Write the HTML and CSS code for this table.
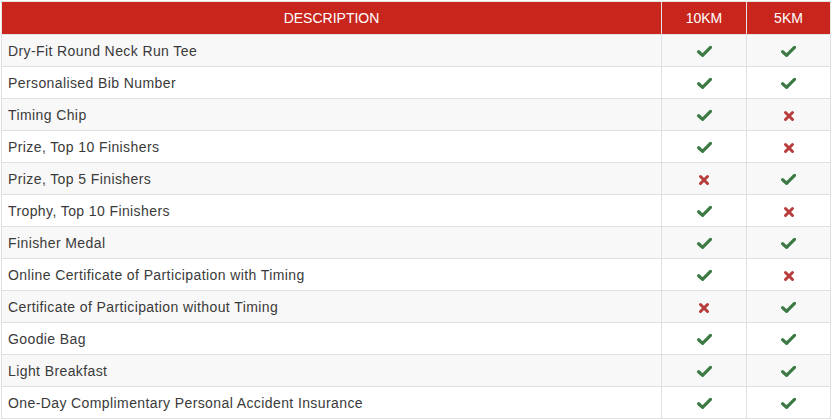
FILE: index.html
```html
<!DOCTYPE html>
<html>
<head>
<meta charset="utf-8">
<link rel="stylesheet" href="styles.css">
</head>
<body>
<svg width="0" height="0" class="defs">
  <defs>
    <symbol id="ok" viewBox="0 0 14 12"><path d="M1.5 6.2 L5.2 9.6 L12.6 2.2" fill="none" stroke="currentColor" stroke-width="3" stroke-linecap="round" stroke-linejoin="round"/></symbol>
    <symbol id="no" viewBox="0 0 12 12"><path d="M2.5 2.5 L9.5 9.5 M9.5 2.5 L2.5 9.5" fill="none" stroke="currentColor" stroke-width="3" stroke-linecap="round"/></symbol>
  </defs>
</svg>
<table class="tbl">
  <thead>
    <tr><th class="c-desc">DESCRIPTION</th><th class="c-a">10KM</th><th class="c-b">5KM</th></tr>
  </thead>
  <tbody>
    <tr><td>Dry-Fit Round Neck Run Tee</td><td class="m"><svg class="ok"><use href="#ok"/></svg></td><td class="m"><svg class="ok"><use href="#ok"/></svg></td></tr>
    <tr><td>Personalised Bib Number</td><td class="m"><svg class="ok"><use href="#ok"/></svg></td><td class="m"><svg class="ok"><use href="#ok"/></svg></td></tr>
    <tr><td>Timing Chip</td><td class="m"><svg class="ok"><use href="#ok"/></svg></td><td class="m"><svg class="no"><use href="#no"/></svg></td></tr>
    <tr><td>Prize, Top 10 Finishers</td><td class="m"><svg class="ok"><use href="#ok"/></svg></td><td class="m"><svg class="no"><use href="#no"/></svg></td></tr>
    <tr><td>Prize, Top 5 Finishers</td><td class="m"><svg class="no"><use href="#no"/></svg></td><td class="m"><svg class="ok"><use href="#ok"/></svg></td></tr>
    <tr><td>Trophy, Top 10 Finishers</td><td class="m"><svg class="ok"><use href="#ok"/></svg></td><td class="m"><svg class="no"><use href="#no"/></svg></td></tr>
    <tr><td>Finisher Medal</td><td class="m"><svg class="ok"><use href="#ok"/></svg></td><td class="m"><svg class="ok"><use href="#ok"/></svg></td></tr>
    <tr><td>Online Certificate of Participation with Timing</td><td class="m"><svg class="ok"><use href="#ok"/></svg></td><td class="m"><svg class="no"><use href="#no"/></svg></td></tr>
    <tr><td>Certificate of Participation without Timing</td><td class="m"><svg class="no"><use href="#no"/></svg></td><td class="m"><svg class="ok"><use href="#ok"/></svg></td></tr>
    <tr><td>Goodie Bag</td><td class="m"><svg class="ok"><use href="#ok"/></svg></td><td class="m"><svg class="ok"><use href="#ok"/></svg></td></tr>
    <tr><td>Light Breakfast</td><td class="m"><svg class="ok"><use href="#ok"/></svg></td><td class="m"><svg class="ok"><use href="#ok"/></svg></td></tr>
    <tr><td>One-Day Complimentary Personal Accident Insurance</td><td class="m"><svg class="ok"><use href="#ok"/></svg></td><td class="m"><svg class="ok"><use href="#ok"/></svg></td></tr>
  </tbody>
</table>
</body>
</html>
```
FILE: styles.css
```css
html, body {
  margin: 0;
  padding: 0;
  background: #fff;
}
body {
  padding: 1px 1px 0 1px;
  font-family: "Liberation Sans", Arial, sans-serif;
  color: #3a3a3a;
}
.defs {
  position: absolute;
  width: 0;
  height: 0;
}
.tbl {
  width: 829px;
  border-collapse: collapse;
  table-layout: fixed;
  font-size: 14px;
}
.tbl th {
  background: #c8261d;
  color: #fff;
  font-weight: normal;
  text-transform: uppercase;
  height: 32px;
  padding: 0;
  text-align: center;
  border: 1px solid #e4e4e4;
  letter-spacing: 0;
}
.c-desc { width: 659px; }
.c-a { width: 84px; }
.c-b { width: 83px; }
.tbl td {
  height: 31px;
  padding: 0 0 0 6px;
  border: 1px solid #e0e0e0;
  vertical-align: middle;
  line-height: 20px;
  letter-spacing: 0.4px;
}
.tbl td.m {
  text-align: center;
  padding: 0;
  letter-spacing: 0;
}
.tbl tbody tr:nth-child(odd) td {
  background: #f8f8f8;
}
.ok {
  width: 15px;
  height: 13px;
  color: #3b7a45;
  vertical-align: middle;
}
.no {
  width: 12px;
  height: 12px;
  color: #b93c3c;
  vertical-align: middle;
}
```
